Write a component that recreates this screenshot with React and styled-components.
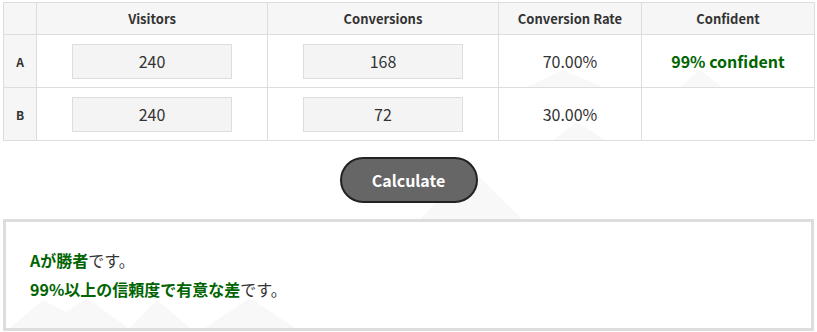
import React, { useState } from "react";
import styled, { createGlobalStyle } from "styled-components";

const GlobalStyle = createGlobalStyle`
  html, body {
    margin: 0;
    padding: 0;
    background: #fff;
  }
  body {
    font-family: "Noto Sans CJK JP", "Noto Sans", sans-serif;
    color: #333;
  }
`;

const Page = styled.div`
  position: relative;
  width: 817px;
  height: 332px;
  overflow: hidden;
  padding: 2px 3px 0;
  box-sizing: border-box;
`;

const Backdrop = styled.svg`
  position: absolute;
  left: 0;
  top: 0;
  z-index: 0;
  pointer-events: none;
`;

const Content = styled.div`
  position: relative;
  z-index: 1;
`;

const Table = styled.table`
  width: 811px;
  border-collapse: collapse;
  table-layout: fixed;
`;

const HeadCell = styled.th`
  height: 31px;
  padding: 0;
  border: 1px solid #ddd;
  background: #f6f6f6;
  font-size: 13px;
  font-weight: 700;
  color: #333;
  text-align: center;
`;

const LabelCell = styled.th`
  height: 52px;
  padding: 0;
  border: 1px solid #ddd;
  background: #f6f6f6;
  font-size: 12px;
  font-weight: 700;
  color: #333;
  text-align: center;
`;

const Cell = styled.td`
  height: 52px;
  padding: 0;
  border: 1px solid #ddd;
  text-align: center;
  font-size: 16px;
  color: ${(props) => (props.good ? "#006400" : "#333")};
  font-weight: ${(props) => (props.good ? 700 : 400)};
`;

const NumInput = styled.input`
  display: block;
  margin: 0 auto;
  width: 160px;
  height: 35px;
  box-sizing: border-box;
  border: 1px solid #ddd;
  background: #f4f4f4;
  font-family: inherit;
  font-size: 16px;
  color: #333;
  text-align: center;
  outline: none;
  padding: 0;
`;

const ButtonRow = styled.div`
  display: flex;
  justify-content: center;
  margin-top: 16px;
`;

const CalcButton = styled.button`
  width: 138px;
  height: 46px;
  border: 2px solid #222;
  border-radius: 23px;
  background: #666;
  color: #fff;
  font-family: inherit;
  font-size: 16px;
  font-weight: 700;
  cursor: pointer;
`;

const Result = styled.div`
  margin-top: 16px;
  height: 112px;
  box-sizing: border-box;
  border: 3px solid #ddd;
  padding: 24px 24px 0;
  font-size: 16px;
`;

const Line = styled.p`
  margin: 0;
  line-height: 29px;
  color: #333;
`;

const Em = styled.strong`
  color: #006400;
  font-weight: 700;
`;

const columns = [
  { key: "label", width: 33, title: "" },
  { key: "visitors", width: 231, title: "Visitors" },
  { key: "conversions", width: 231, title: "Conversions" },
  { key: "rate", width: 143, title: "Conversion Rate" },
  { key: "confident", width: 173, title: "Confident" },
];

const mountains = [
  "527,87 563,70 603,87",
  "680,87 700,70 722,87",
  "553,140 577,122 605,140",
  "420,219 470,168 522,219",
  "10,328 43,300 66,312 87,298 128,328",
  "130,328 157,300 190,328",
  "205,328 250,298 295,328",
];

export default function App() {
  const [rows, setRows] = useState([
    { name: "A", visitors: "240", conversions: "168" },
    { name: "B", visitors: "240", conversions: "72" },
  ]);

  const update = (i, key, value) => {
    setRows(rows.map((r, idx) => (idx === i ? { ...r, [key]: value } : r)));
  };

  return (
    <>
      <GlobalStyle />
      <Page>
        <Backdrop width="817" height="332">
          {mountains.map((pts, i) => (
            <polygon key={i} points={pts} fill="#f8f8f8" />
          ))}
        </Backdrop>
        <Content>
          <Table>
            <colgroup>
              {columns.map((c) => (
                <col key={c.key} style={{ width: c.width }} />
              ))}
            </colgroup>
            <thead>
              <tr>
                {columns.map((c) => (
                  <HeadCell key={c.key}>{c.title}</HeadCell>
                ))}
              </tr>
            </thead>
            <tbody>
              {rows.map((r, i) => {
                const rate = ((Number(r.conversions) / Number(r.visitors)) * 100).toFixed(2);
                return (
                  <tr key={r.name}>
                    <LabelCell>{r.name}</LabelCell>
                    <Cell>
                      <NumInput
                        value={r.visitors}
                        onChange={(e) => update(i, "visitors", e.target.value)}
                      />
                    </Cell>
                    <Cell>
                      <NumInput
                        value={r.conversions}
                        onChange={(e) => update(i, "conversions", e.target.value)}
                      />
                    </Cell>
                    <Cell>{rate}%</Cell>
                    <Cell good>{i === 0 ? "99% confident" : ""}</Cell>
                  </tr>
                );
              })}
            </tbody>
          </Table>
          <ButtonRow>
            <CalcButton>Calculate</CalcButton>
          </ButtonRow>
          <Result>
            <Line>
              <Em>Aが勝者</Em>です。
            </Line>
            <Line>
              <Em>99%以上の信頼度で有意な差</Em>です。
            </Line>
          </Result>
        </Content>
      </Page>
    </>
  );
}
